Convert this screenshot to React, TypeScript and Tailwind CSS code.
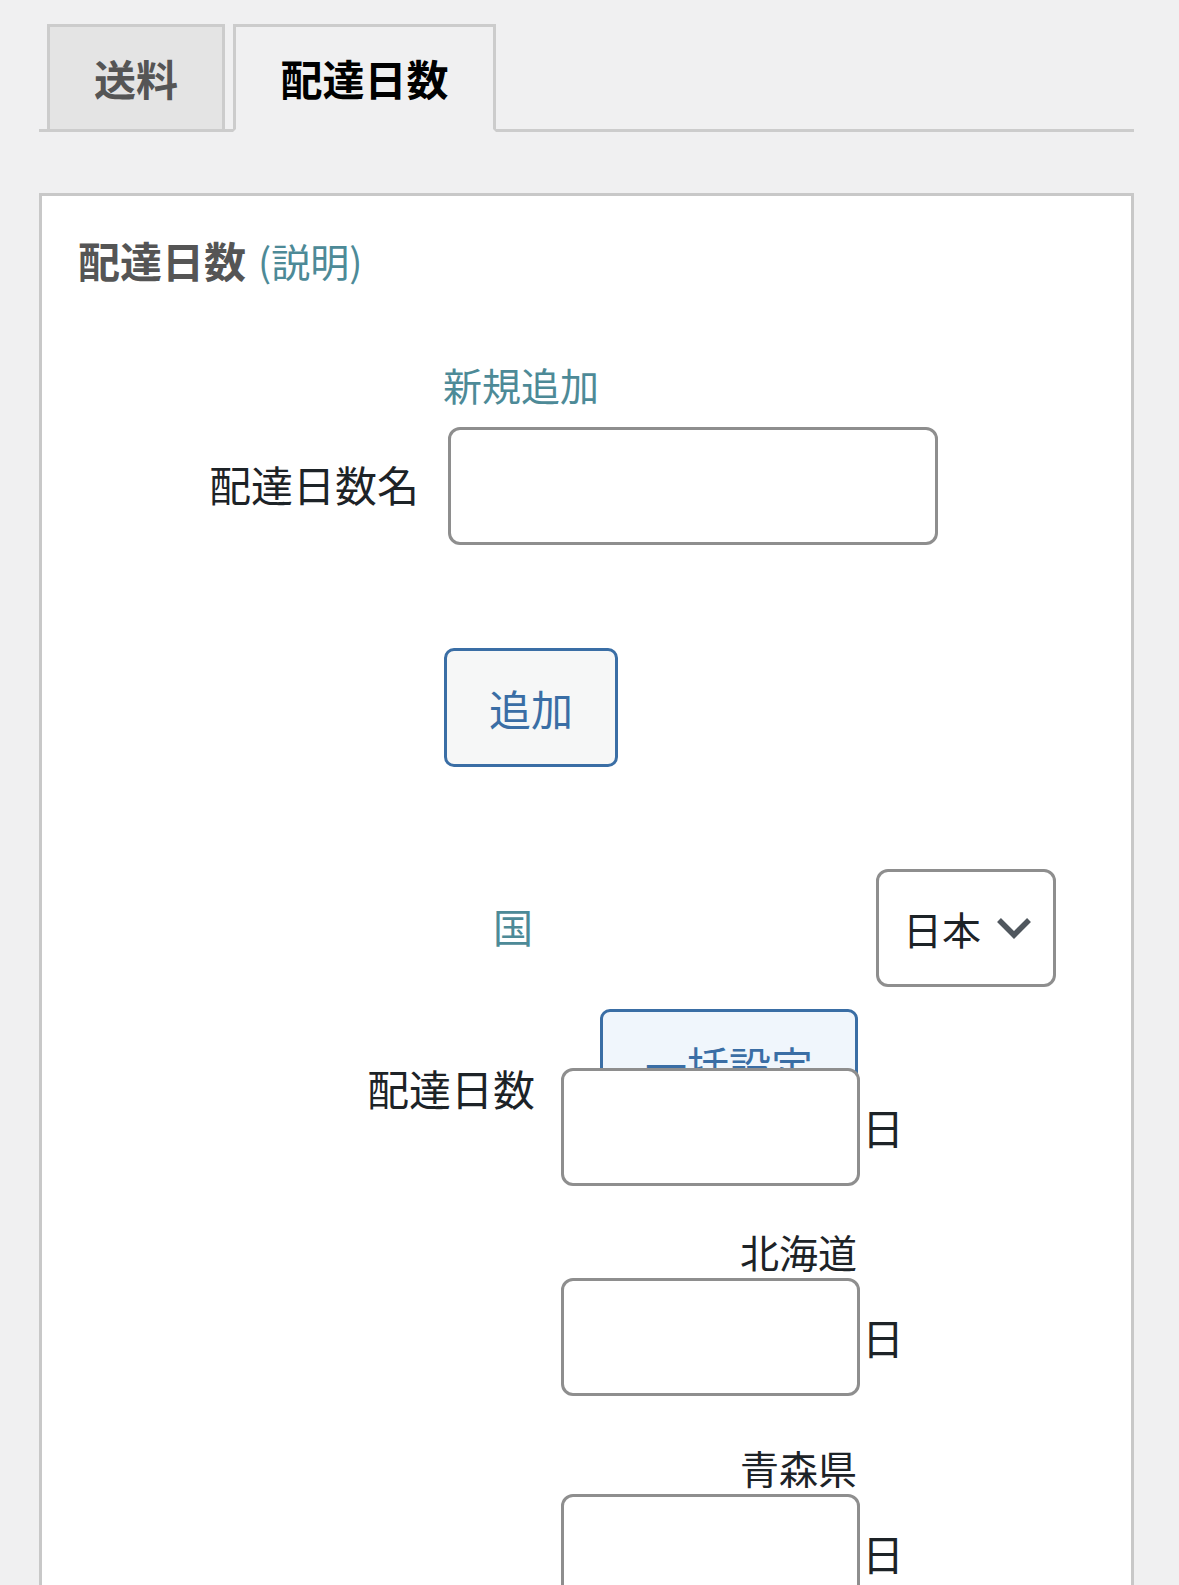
const prefectures = ["北海道", "青森県"];

const Field = ({ width }: { width: string }) => (
  <input
    type="text"
    className={`${width} h-[118px] rounded-[12px] border-[3px] border-[#8e8e8e] bg-white px-4 text-[42px] outline-none`}
  />
);

const App = () => {
  return (
    <div className="h-[1585px] overflow-hidden bg-[#f0f0f1] pl-[39px] pr-[45px] pt-[24px] font-['Noto_Sans_CJK_JP',sans-serif] text-[#1d2327]">
      {/* tabs */}
      <div className="flex items-end border-b-[3px] border-[#cccccc] pl-[8px]">
        <div className="-mb-[3px] flex h-[108px] w-[178px] items-center justify-center border-[3px] border-[#cccccc] bg-[#e4e4e4] text-[42px] font-bold leading-none text-[#555]">
          送料
        </div>
        <div className="-mb-[3px] ml-[8px] flex h-[108px] w-[263px] items-center justify-center border-[3px] border-[#cccccc] border-b-[#f0f0f1] bg-[#f0f0f1] text-[42px] font-bold leading-none text-black">
          配達日数
        </div>
      </div>

      {/* panel */}
      <div className="mt-[61px] border-[3px] border-[#c8c8c8] bg-white pb-40">
        <div className="ml-[36px] mt-[34px] flex h-[60px] items-center">
          <span className="text-[42px] font-bold leading-none text-[#555]">配達日数</span>
          <span className="ml-[12px] text-[39px] leading-none text-[#4d8a97]">(説明)</span>
        </div>

        <div className="ml-[401px] mt-[69px] flex h-[50px] items-center text-[39px] leading-none text-[#4d8a97]">
          新規追加
        </div>

        <div className="mt-[18px] flex items-center">
          <div className="-mt-[4px] w-[377px] text-right text-[42px] leading-none">配達日数名</div>
          <div className="ml-[29px]">
            <Field width="w-[490px]" />
          </div>
        </div>

        <button className="ml-[402px] mt-[103px] block h-[119px] w-[174px] rounded-[10px] border-[3px] border-[#3a6ea5] bg-[#f6f7f7] text-[42px] leading-none text-[#3a6ea5]">
          追加
        </button>

        <div className="mt-[102px] flex items-center">
          <div className="-mt-[4px] ml-[451px] w-[41px] text-[40px] leading-none text-[#4d8a97]">国</div>
          <div className="ml-[342px] flex h-[118px] w-[180px] items-center rounded-[12px] border-[3px] border-[#8e8e8e] bg-white pl-[24px]">
            <span className="text-[39px] leading-none">日本</span>
            <svg className="ml-[15px]" width="36" height="22" viewBox="0 0 36 22" fill="none">
              <path d="M3 3 L18 18 L33 3" stroke="#50575e" strokeWidth="5.5" strokeLinejoin="miter" />
            </svg>
          </div>
        </div>

        <button className="ml-[558px] mt-[22px] block h-[119px] w-[258px] rounded-[10px] border-[3px] border-[#3a6ea5] bg-[#f0f6fc] pb-[8px] text-[42px] leading-none text-[#3a6ea5]">
          一括設定
        </button>

        <div className="relative -mt-[60px] flex items-start">
          <div className="-mt-[2px] flex h-[44px] w-[493px] items-center justify-end text-[42px] leading-none">配達日数</div>
          <div className="ml-[26px] flex items-center">
            <Field width="w-[299px]" />
            <span className="ml-[2px] text-[42px] leading-none">日</span>
          </div>
        </div>

        {prefectures.map((name, i) => (
          <div key={name} className={i === 0 ? "mt-[40px]" : "mt-[46px]"}>
            <div className="ml-[519px] flex h-[50px] w-[299px] items-center justify-end pr-[3px] text-[39px] leading-none">
              {name}
            </div>
            <div className="ml-[519px] mt-[2px] flex items-center">
              <Field width="w-[299px]" />
              <span className="ml-[2px] text-[42px] leading-none">日</span>
            </div>
          </div>
        ))}
      </div>
    </div>
  );
};

export default App;
